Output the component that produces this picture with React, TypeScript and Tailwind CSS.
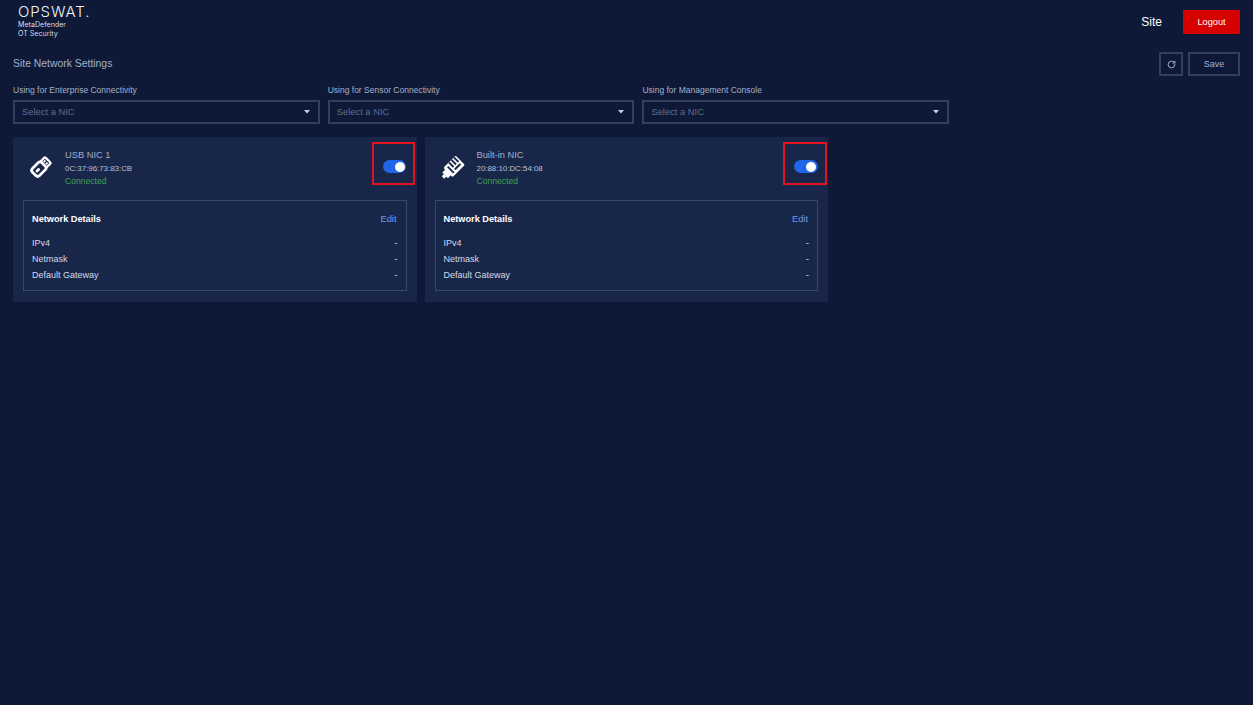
import React from "react";
import { RotateCw } from "lucide-react";

function Caret() {
  return <svg width="6" height="3.5" viewBox="0 0 6 3.5" className="shrink-0"><path d="M0 0h6L3 3.5z" fill="#c6cfe0" /></svg>;
}

function UsbIcon() {
  return (
    <svg width="22" height="22" viewBox="0 0 28 28" fill="none" className="overflow-visible ml-[1px] mb-[3px]">
      <g transform="rotate(-45 14 14)">
        <rect x="1.6" y="7.6" width="17" height="12.8" rx="3.4" stroke="#fff" strokeWidth="3.4" />
        <path d="M18.5 8.6h7a1 1 0 0 1 1 1v8.8a1 1 0 0 1-1 1h-7" stroke="#fff" strokeWidth="2.8" />
        <rect x="20.8" y="10.8" width="3" height="2.4" fill="#fff" />
        <rect x="20.8" y="14.8" width="3" height="2.4" fill="#fff" />
        <rect x="5" y="12.2" width="6.5" height="3.6" rx="1.8" fill="#fff" />
      </g>
    </svg>
  );
}

function EthIcon() {
  return (
    <svg width="24.5" height="24.5" viewBox="0 0 28 28" fill="none" className="overflow-visible">
      <g transform="rotate(-45 14 14)">
        <rect x="7" y="6.5" width="20" height="15" rx="1.5" fill="#fff" />
        <rect x="2.5" y="9.5" width="5" height="9" fill="#fff" />
        <rect x="-1" y="12" width="3.6" height="4" fill="#fff" />
        <rect x="10.5" y="9" width="2.2" height="10" fill="#18264a" />
        <rect x="15" y="6.5" width="2.2" height="7.5" fill="#18264a" />
        <rect x="19" y="6.5" width="2.2" height="7.5" fill="#18264a" />
        <rect x="23" y="6.5" width="2.2" height="7.5" fill="#18264a" />
        <rect x="15" y="16" width="9" height="2.2" fill="#18264a" />
      </g>
    </svg>
  );
}

function Select({ label }: { label: string }) {
  return (
    <div className="w-[306.7px]">
      <div className="h-[16px] pt-[1px] text-[8.5px] leading-[16px] text-[#a3b0c9] mb-[3px]">{label}</div>
      <div className="h-[24px] flex items-center justify-between pl-[7px] pr-[8px] border-2 border-[#323f60] text-[9.4px] text-[#606d8d]">
        <span>Select a NIC</span>
        <Caret />
      </div>
    </div>
  );
}

function Row({ k }: { k: string }) {
  return (
    <div className="h-[16.2px] flex items-center justify-between text-[9px] text-[#d5dbe8]">
      <span>{k}</span>
      <span>-</span>
    </div>
  );
}

function NicCard({ name, mac, icon }: { name: string; mac: string; icon: React.ReactNode }) {
  return (
    <div className="w-[403.5px] h-[165px] bg-[#18264a] px-[10px] relative">
      <div className="flex h-[63px] items-center">
        <div className="w-[32px] flex justify-center pl-[3px]">{icon}</div>
        <div className="ml-[10px]">
          <div className="text-[9.3px] leading-[13px] text-[#a3b0c9]">{name}</div>
          <div className="text-[7.9px] leading-[13px] text-[#b9c2d4]">{mac}</div>
          <div className="text-[8.6px] leading-[13px] text-[#3fa34d]">Connected</div>
        </div>
      </div>
      <div className="absolute right-[1.25px] top-[5px] w-[43.5px] h-[43px] border-2 border-[#e3121f] flex items-center justify-end pr-[7px] pt-[6px]">
        <div className="w-[23.5px] h-[13px] rounded-full bg-[#2166e8] relative">
          <div className="absolute right-[1.5px] top-[1.5px] w-[10px] h-[10px] rounded-full bg-white" />
        </div>
      </div>
      <div className="h-[91px] border border-[#3a476a] px-[8px]">
        <div className="flex h-[34px] pt-[3px] items-center justify-between">
          <span className="text-[9.2px] font-bold text-white">Network Details</span>
          <span className="text-[9.3px] text-[#6f9bf0] mr-[1px]">Edit</span>
        </div>
        <div className="pt-[0.5px]">
          <Row k="IPv4" />
          <Row k="Netmask" />
          <Row k="Default Gateway" />
        </div>
      </div>
    </div>
  );
}

export default function App() {
  return (
    <div className="w-[1253px] h-[705px] bg-[#0d1937] overflow-hidden font-['Liberation_Sans',sans-serif]">
      <header className="h-[44px] flex justify-between items-start pl-[18px] pr-[13px]">
        <div className="pt-[2.5px] font-['Inter',sans-serif] text-[#f2f4f8]">
          <div className="text-[15px] leading-[17px] font-light tracking-[0.9px]">OPSWAT.</div>
          <div className="text-[7.1px] leading-[9px] mt-[0px] text-[#d8dde8]">MetaDefender</div>
          <div className="text-[7.1px] leading-[9px] text-[#d8dde8]">OT Security</div>
        </div>
        <div className="flex items-center pt-[10px]">
          <span className="text-[12px] text-white mr-[21px]">Site</span>
          <button className="w-[57px] h-[24px] pt-[1px] bg-[#d60000] text-white text-[9.2px]">Logout</button>
        </div>
      </header>
      <div className="px-[13px] pt-[8px]">
        <div className="flex items-center justify-between h-[24px]">
          <span className="text-[10.4px] text-[#a3b0c9]">Site Network Settings</span>
          <div className="flex gap-[5px]">
            <button className="w-[24px] h-[24px] border-2 border-[#323f60] flex items-center justify-center">
              <RotateCw size={9} color="#a7b1c6" strokeWidth={2.6} />
            </button>
            <button className="w-[52px] h-[24px] pt-[2px] border-2 border-[#323f60] text-[9.1px] text-[#a3b0c9]">Save</button>
          </div>
        </div>
        <div className="flex gap-[8px] mt-[5px]">
          <Select label="Using for Enterprise Connectivity" />
          <Select label="Using for Sensor Connectivity" />
          <Select label="Using for Management Console" />
        </div>
        <div className="flex gap-[8px] mt-[13px]">
          <NicCard name="USB NIC 1" mac="0C:37:96:73:83:CB" icon={<UsbIcon />} />
          <NicCard name="Built-in NIC" mac="20:88:10:DC:54:08" icon={<EthIcon />} />
        </div>
      </div>
    </div>
  );
}
